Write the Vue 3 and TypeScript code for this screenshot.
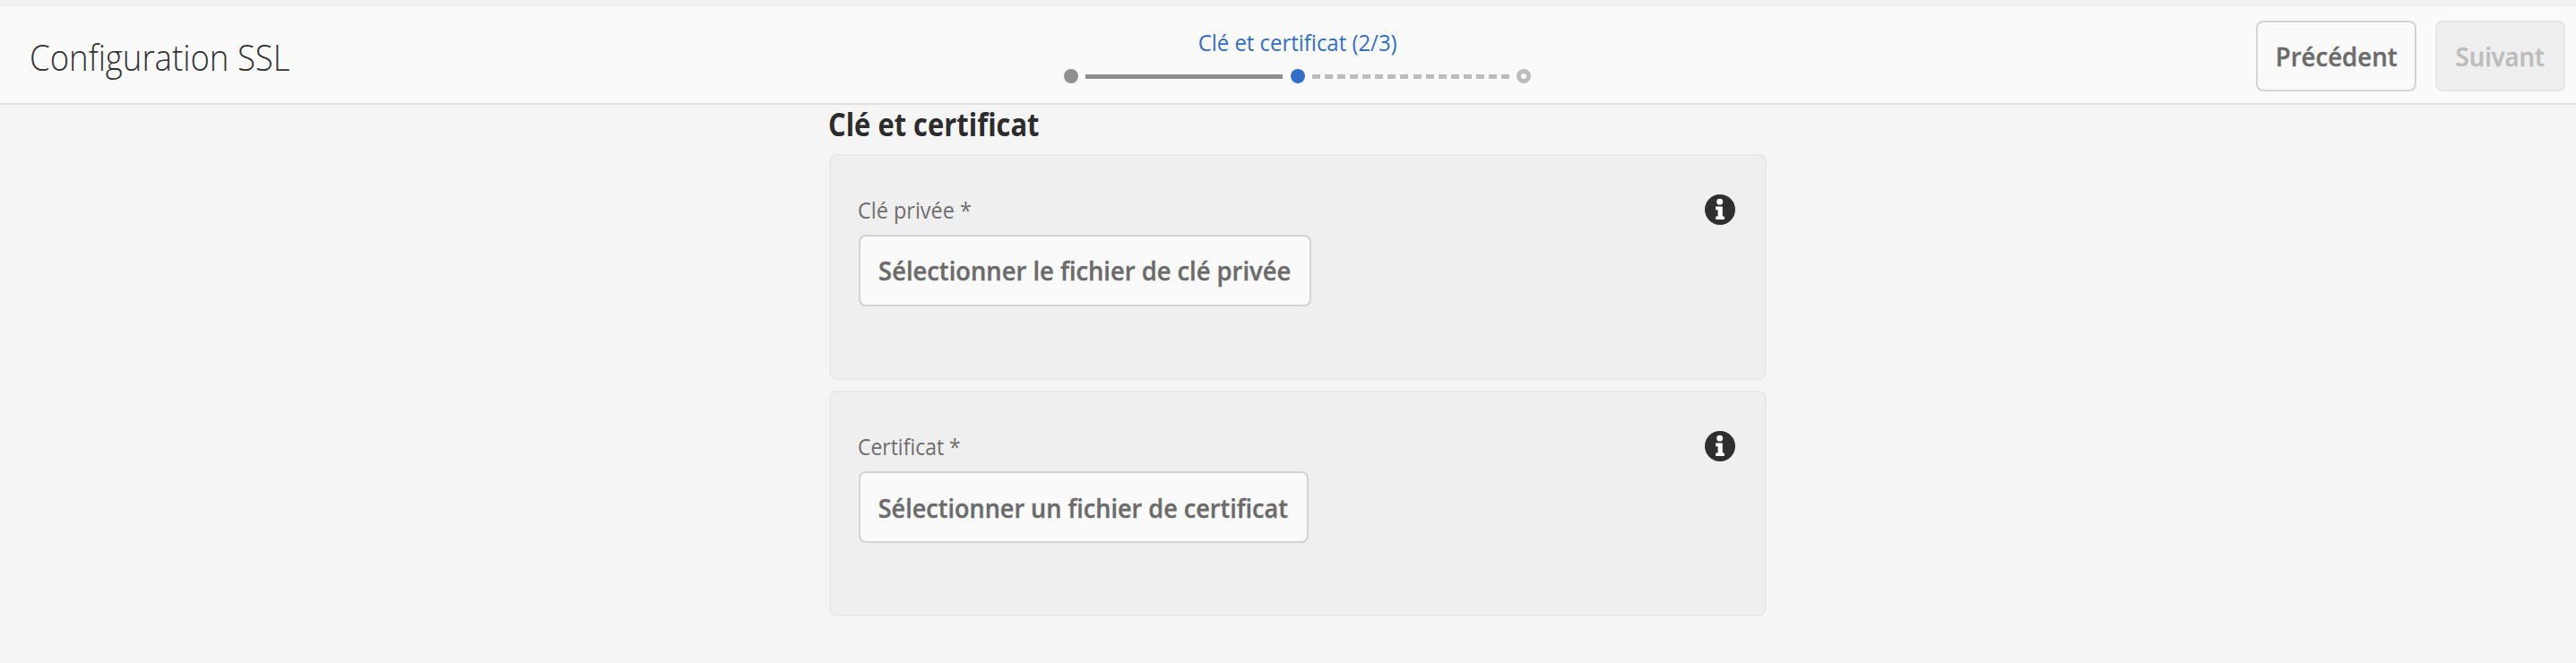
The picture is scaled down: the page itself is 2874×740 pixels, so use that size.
<script setup lang="ts">
interface FileField {
  id: string
  label: string
  action: string
}

const fields: FileField[] = [
  { id: 'key', label: 'Clé privée *', action: 'Sélectionner le fichier de clé privée' },
  { id: 'cert', label: 'Certificat *', action: 'Sélectionner un fichier de certificat' },
]
</script>

<template>
  <div class="page">
    <header class="bar">
      <h1 class="title"><span>Configuration SSL</span></h1>
      <div class="steps">
        <div class="steps-label"><span>Clé et certificat (2/3)</span></div>
        <div class="track">
          <i class="dot done"></i>
          <i class="line"></i>
          <i class="dot current"></i>
          <i class="line dashed"></i>
          <i class="dot next"></i>
        </div>
      </div>
      <div class="actions">
        <button class="btn prev" type="button"><span>Précédent</span></button>
        <button class="btn follow" type="button" disabled><span>Suivant</span></button>
      </div>
    </header>
    <main class="content">
      <h2 class="heading"><span>Clé et certificat</span></h2>
      <section v-for="f in fields" :key="f.id" class="card" :class="f.id">
        <div class="field">
          <div class="label"><span>{{ f.label }}</span></div>
          <button class="btn pick" type="button"><span>{{ f.action }}</span></button>
        </div>
        <svg class="info" viewBox="0 0 34 34" width="34" height="34" aria-hidden="true">
          <circle cx="17" cy="17" r="17" fill="#2f2f2f" />
          <circle cx="16.7" cy="8.2" r="3.4" fill="#fff" />
          <path d="M12.2 13.6h7.6v10.8h2v3.6h-9.6v-3.6h2.4v-7.2h-2.4z" fill="#fff" />
        </svg>
      </section>
    </main>
  </div>
</template>

<style>
body {
  background: #f5f5f5;
}
</style>

<style scoped>
.page {
  box-sizing: border-box;
  width: 2874px;
  height: 740px;
  overflow: hidden;
  border-top: 7px solid #f0f0f0;
  background: #f5f5f5;
  font-family: "Open Sans", "Noto Sans", sans-serif;
  color: #6e6e6e;
}
.page span {
  display: inline-block;
  transform-origin: left center;
}
.bar {
  box-sizing: border-box;
  height: 110px;
  display: grid;
  grid-template-columns: 1187px 521px 1fr;
  background: #fafafa;
  border-bottom: 2px solid #e1e1e1;
}
.title {
  margin: 0;
  padding: 27px 0 0 33px;
  font-size: 40px;
  line-height: 59px;
  font-weight: 300;
  white-space: nowrap;
  color: #323232;
}
.title span {
  transform: scaleX(0.913);
}
.steps-label {
  margin-top: 21px;
  line-height: 38px;
  font-size: 26px;
  text-align: center;
  white-space: nowrap;
  color: #326ec8;
}
.steps-label span {
  transform: scaleX(0.92);
  transform-origin: center;
}
.track {
  display: flex;
  align-items: center;
  justify-content: space-between;
  margin-top: 11px;
}
.dot {
  box-sizing: border-box;
  width: 16px;
  height: 16px;
  border-radius: 50%;
}
.done {
  background: #909090;
}
.current {
  background: #326ec8;
}
.next {
  border: 5px solid #bcbcbc;
}
.line {
  width: 220px;
  height: 5px;
  background: #8e8e8e;
}
.dashed {
  background: repeating-linear-gradient(90deg, #bcbcbc 0 9px, transparent 9px 14.07px);
}
.actions {
  display: flex;
  justify-content: flex-end;
  gap: 21px;
  padding: 16px 12px 0 0;
}
.btn {
  box-sizing: border-box;
  display: flex;
  justify-content: center;
  height: 79px;
  padding: 0;
  border: 2px solid #d3d3d3;
  border-radius: 8px;
  background: #fafafa;
  color: #6b6b6b;
  font-family: inherit;
  font-size: 29.5px;
  font-weight: 600;
  line-height: 76px;
  white-space: nowrap;
  -webkit-text-stroke: 0.4px currentColor;
}
.btn span {
  transform: scaleX(0.935);
  transform-origin: center;
}
.prev {
  width: 179px;
}
.follow {
  width: 145px;
  border-color: #e6e6e6;
  background: #efefef;
  color: #bcbcbc;
}
.content {
  width: 1046px;
  margin-left: 925px;
}
.heading {
  margin: 0 0 7px -1px;
  height: 48px;
  font-size: 35px;
  font-weight: 700;
  line-height: 44px;
  white-space: nowrap;
  color: #2c2c2c;
}
.heading span {
  transform: scaleX(0.883);
}
.card {
  box-sizing: border-box;
  display: flex;
  justify-content: space-between;
  height: 252px;
  margin-bottom: 12px;
  padding: 43px 33px 0 31px;
  border: 2px solid #e8e8e8;
  border-radius: 9px;
  background: #efefef;
}
.label {
  height: 45px;
  margin-left: -1px;
  font-size: 26px;
  line-height: 34px;
  white-space: nowrap;
}
.label span {
  transform: scaleX(0.902);
}
.cert .label span {
  transform: scaleX(0.882);
}
.pick {
  width: 505px;
  height: 80px;
  line-height: 76px;
}
.pick span {
  transform: scaleX(0.927);
}
.cert .pick {
  width: 502px;
  line-height: 78px;
}
.cert .pick span {
  transform: translateX(-1px) scaleX(0.917);
}
</style>
